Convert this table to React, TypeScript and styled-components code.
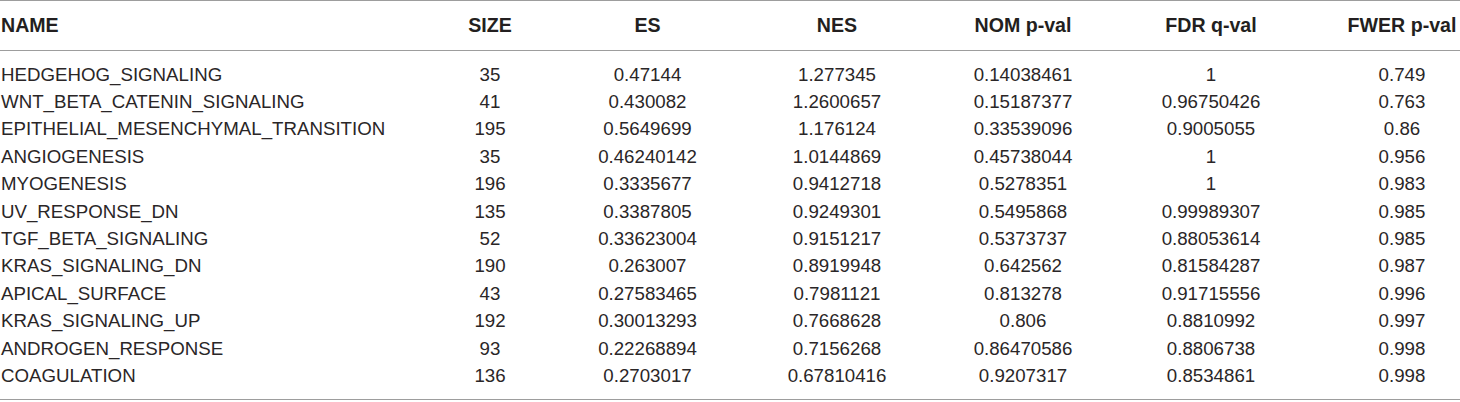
import React from "react";
import styled, { createGlobalStyle } from "styled-components";

const GlobalStyle = createGlobalStyle`
  html, body { margin: 0; padding: 0; background: #ffffff; }
  body { font-family: "Liberation Sans", Arial, sans-serif; color: #231f20; }
`;

const Table = styled.div`
  width: 1460px;
  border-top: 1px solid #9d9d9d;
  border-bottom: 1px solid #9d9d9d;
`;

const cols = "411px 158px 157px 222px 150px 226px 136px";

const HeaderRow = styled.div`
  display: grid;
  grid-template-columns: ${cols};
  height: 49px;
  align-items: center;
  border-bottom: 1px solid #9d9d9d;
`;

const Body = styled.div`
  padding: 10px 0 9px;
`;

const Row = styled.div`
  display: grid;
  grid-template-columns: ${cols};
  height: 27.4px;
  align-items: center;
`;

const HeadCell = styled.div<{ $left?: boolean; $shift?: number }>`
  font-size: 19.6px;
  font-weight: 700;
  color: #231f20;
  text-align: ${(p) => (p.$left ? "left" : "center")};
  padding-left: ${(p) => (p.$left ? 1 : p.$shift ?? 0)}px;
  white-space: nowrap;
`;

const Cell = styled.div<{ $left?: boolean; $shift?: number }>`
  font-size: 18.7px;
  color: #2a2627;
  text-align: ${(p) => (p.$left ? "left" : "center")};
  padding-left: ${(p) => (p.$left ? 1 : p.$shift ?? 0)}px;
  white-space: nowrap;
`;

const headers = ["NAME", "SIZE", "ES", "NES", "NOM p-val", "FDR q-val", "FWER p-val"];

const rows: string[][] = [
  ["HEDGEHOG_SIGNALING", "35", "0.47144", "1.277345", "0.14038461", "1", "0.749"],
  ["WNT_BETA_CATENIN_SIGNALING", "41", "0.430082", "1.2600657", "0.15187377", "0.96750426", "0.763"],
  ["EPITHELIAL_MESENCHYMAL_TRANSITION", "195", "0.5649699", "1.176124", "0.33539096", "0.9005055", "0.86"],
  ["ANGIOGENESIS", "35", "0.46240142", "1.0144869", "0.45738044", "1", "0.956"],
  ["MYOGENESIS", "196", "0.3335677", "0.9412718", "0.5278351", "1", "0.983"],
  ["UV_RESPONSE_DN", "135", "0.3387805", "0.9249301", "0.5495868", "0.99989307", "0.985"],
  ["TGF_BETA_SIGNALING", "52", "0.33623004", "0.9151217", "0.5373737", "0.88053614", "0.985"],
  ["KRAS_SIGNALING_DN", "190", "0.263007", "0.8919948", "0.642562", "0.81584287", "0.987"],
  ["APICAL_SURFACE", "43", "0.27583465", "0.7981121", "0.813278", "0.91715556", "0.996"],
  ["KRAS_SIGNALING_UP", "192", "0.30013293", "0.7668628", "0.806", "0.8810992", "0.997"],
  ["ANDROGEN_RESPONSE", "93", "0.22268894", "0.7156268", "0.86470586", "0.8806738", "0.998"],
  ["COAGULATION", "136", "0.2703017", "0.67810416", "0.9207317", "0.8534861", "0.998"],
];

export default function App() {
  return (
    <>
      <GlobalStyle />
      <Table>
        <HeaderRow>
          {headers.map((h, i) => (
            <HeadCell key={h} $left={i === 0} $shift={i === 6 ? 20 : 0}>
              {h}
            </HeadCell>
          ))}
        </HeaderRow>
        <Body>
          {rows.map((r) => (
            <Row key={r[0]}>
              {r.map((v, i) => (
                <Cell key={i} $left={i === 0} $shift={i === 6 ? 20 : 0}>
                  {v}
                </Cell>
              ))}
            </Row>
          ))}
        </Body>
      </Table>
    </>
  );
}
